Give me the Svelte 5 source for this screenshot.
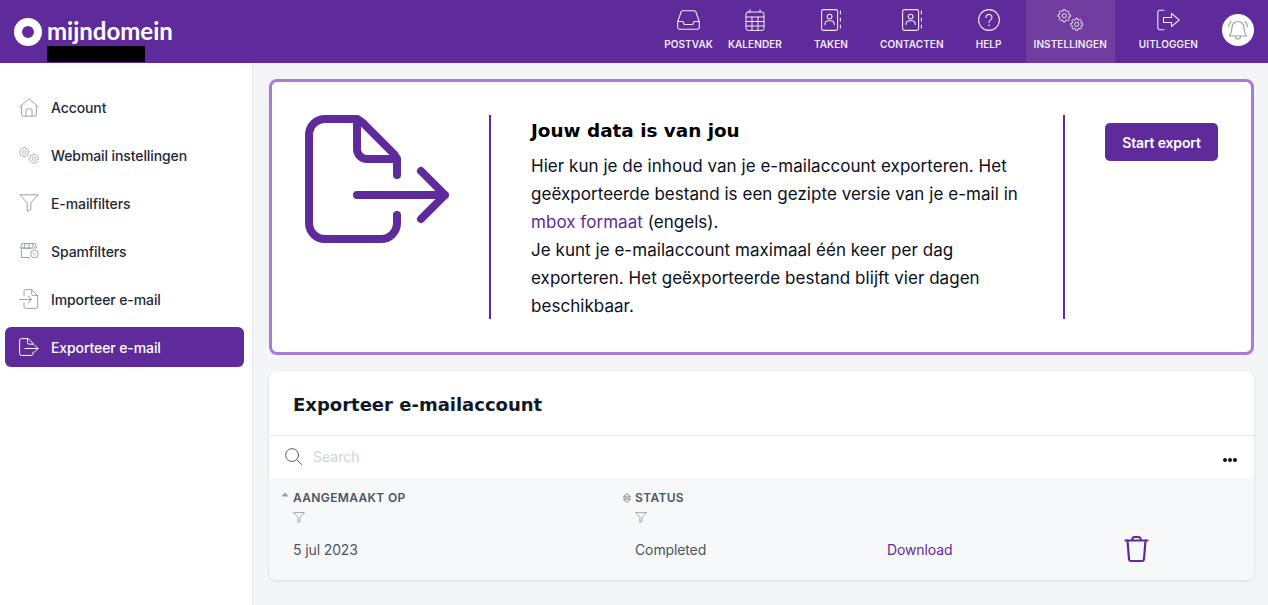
<script>
  // gear outline with square-ish teeth, used by the settings icons
  function gear(cx, cy, r, teeth = 8) {
    const pts = [];
    const step = (Math.PI * 2) / teeth;
    for (let i = 0; i < teeth; i++) {
      const a = i * step;
      const w = step * 0.2;
      const inner = r * 0.76;
      pts.push([a - step / 2 + w * 0.8, inner], [a - w, r], [a + w, r], [a + step / 2 - w * 0.8, inner]);
    }
    return (
      pts
        .map(([a, l], i) => `${i ? 'L' : 'M'}${(cx + Math.cos(a) * l).toFixed(2)} ${(cy + Math.sin(a) * l).toFixed(2)}`)
        .join('') + 'Z'
    );
  }

  const sideItems = [
    { label: 'Account', icon: 'home' },
    { label: 'Webmail instellingen', icon: 'gears' },
    { label: 'E-mailfilters', icon: 'filter' },
    { label: 'Spamfilters', icon: 'spam' },
    { label: 'Importeer e-mail', icon: 'import' },
    { label: 'Exporteer e-mail', icon: 'export', active: true }
  ];
</script>

{#snippet gears(size, h)}
  <svg width={size} height={h} viewBox="0 0 27 23" fill="none" stroke="currentColor" stroke-width="1" stroke-linejoin="round">
    <path d={gear(7, 7, 6.6)} />
    <circle cx="7" cy="7" r="2.2" />
    <path d={gear(20, 16, 6.4)} />
    <circle cx="20" cy="16" r="2.2" />
  </svg>
{/snippet}

{#snippet person()}
  <svg width="20" height="22" viewBox="0 0 20 22" fill="none" stroke="currentColor" stroke-width="1.1" stroke-linecap="round">
    <rect x="0.6" y="0.6" width="16" height="20.8" rx="1.8" />
    <circle cx="8.6" cy="7.6" r="2.4" />
    <path d="M4 15.6v-.6a3.4 3.4 0 0 1 3.4-3.2h2.4a3.4 3.4 0 0 1 3.4 3.2v.6" />
    <path d="M19.4 2v3M19.4 9v3M19.4 16v3" />
  </svg>
{/snippet}

{#snippet funnel(w, h)}
  <svg width={w} height={h} viewBox="0 0 20 18" fill="none" stroke="currentColor" stroke-width="1" stroke-linejoin="round">
    <path d="M.8.8h18.4l-7.4 8v6.6l-3.6 2V8.8z" />
  </svg>
{/snippet}

<div class="page">
  <header class="topbar">
    <div class="brand">
      <div class="brand-row">
        <span class="ring"></span>
        <span class="brand-name">mijndomein</span>
      </div>
      <span class="redacted"></span>
    </div>

    <nav class="topnav">
      <a class="nav-item tight">
        <svg width="23" height="20" viewBox="0 0 23 20" fill="none" stroke="currentColor" stroke-width="1.1" stroke-linejoin="round">
          <path d="M.7 11.5 4.2 1.8Q4.5.7 5.6.7h11.8q1.100 0 1.400 1.100l3.500 9.700v5.800q0 1.900-1.900 1.900H2.600q-1.900 0-1.900-1.900z" />
          <path d="M.7 11.500h5.200l1.400 3h8.400l1.400-3h5.200" />
        </svg>
        <span>POSTVAK</span>
      </a>
      <a class="nav-item tight-left">
        <svg width="20" height="22" viewBox="0 0 20 22" fill="none" stroke="currentColor" stroke-width="1" stroke-linecap="round">
          <rect x="1" y="3" width="18" height="18.400" rx="2" />
          <path d="M1 8h18M1 12.500h18M1 17h18M7 8v13.400M13 8v13.400M5 .8V3M15 .8V3" />
        </svg>
        <span>KALENDER</span>
      </a>
      <a class="nav-item">{@render person()}<span>TAKEN</span></a>
      <a class="nav-item">{@render person()}<span>CONTACTEN</span></a>
      <a class="nav-item">
        <svg width="22" height="22" viewBox="0 0 22 22" fill="none" stroke="currentColor" stroke-width="1.100" stroke-linecap="round">
          <circle cx="11" cy="11" r="10.400" />
          <path d="M8 8.400a3 3 0 1 1 4.600 2.500c-1 .7-1.600 1.300-1.600 2.500" />
          <path d="M11 16.300v.2" stroke-width="1.500" />
        </svg>
        <span>HELP</span>
      </a>
      <a class="nav-item current">{@render gears(27, 23)}<span>INSTELLINGEN</span></a>
      <a class="nav-item">
        <svg width="23" height="21" viewBox="0 0 23 21" fill="none" stroke="currentColor" stroke-width="1.100" stroke-linecap="round" stroke-linejoin="round">
          <path d="M7 .8H3Q.8.800.8 3v15q0 2.200 2.200 2.200h4" />
          <path d="M6.500 8h8V3.800l7.700 6.700-7.700 6.700V13h-8z" />
        </svg>
        <span>UITLOGGEN</span>
      </a>
      <span class="bell">
        <svg width="24" height="24" viewBox="0 0 24 24" fill="none" stroke="#9aa1ab" stroke-width="1.200" stroke-linecap="round" stroke-linejoin="round">
          <path d="M12 3.500a6 6 0 0 0-6 6c0 5-1 6.500-2.500 8.500h17c-1.500-2-2.500-3.500-2.500-8.500a6 6 0 0 0-6-6z" />
          <path d="M9.500 18.500a2.500 2.500 0 0 0 5 0" />
          <path d="M2.500 8.500A8 8 0 0 1 5 3.500M21.500 8.500A8 8 0 0 0 19 3.500" />
        </svg>
      </span>
    </nav>
  </header>

  <div class="layout">
    <aside class="sidebar">
      {#each sideItems as item}
        <a class="side-item" class:active={item.active}>
          <span class="side-icon">
            {#if item.icon === 'home'}
              <svg width="20" height="19" viewBox="0 0 20 19" fill="none" stroke="currentColor" stroke-width="1" stroke-linejoin="round">
                <path d="M.6 9 10 .8 19.400 9M2.600 8v8.500q0 1.700 1.700 1.700h11.400q1.700 0 1.700-1.700V8" />
                <path d="M7 18.200v-6q0-1.200 1.200-1.200h3.600q1.200 0 1.200 1.200v6" />
              </svg>
            {:else if item.icon === 'gears'}
              {@render gears(20, 17)}
            {:else if item.icon === 'filter'}
              {@render funnel(20, 18)}
            {:else if item.icon === 'spam'}
              <svg width="20" height="16" viewBox="0 0 20 16" fill="none" stroke="currentColor" stroke-width="1" stroke-linejoin="round">
                <path d="M3 .6h13l1.500 4.400H1.500z" />
                <path d="M1.500 5q1.300 1.600 2.700 0 1.300 1.600 2.700 0 1.300 1.600 2.700 0 1.300 1.600 2.700 0M2.400 6.500v8h8.600M6 .6 5 5M10 .6V5M13.500.6l.8 3.500" />
                <circle cx="15.500" cy="11" r="3.800" />
                <path d="M14 9.500l3 3" />
              </svg>
            {:else if item.icon === 'import'}
              <svg width="20" height="20" viewBox="0 0 20 20" fill="none" stroke="currentColor" stroke-width="1" stroke-linecap="round" stroke-linejoin="round">
                <path d="M5 7V2.200Q5 .6 6.600.6h6.100l6 6v11.200q0 1.600-1.600 1.600H6.600Q5 19.400 5 17.800V14" />
                <path d="M12.700.6v4.400q0 1.600 1.600 1.600h4.400" />
                <path d="M.6 10.500h11.900M9 7l3.500 3.500L9 14" />
              </svg>
            {:else}
              <svg width="20" height="18" viewBox="0 0 20 18" fill="none" stroke="currentColor" stroke-width="1" stroke-linecap="round" stroke-linejoin="round">
                <path d="M14 6.500V5.500L9.500.6H2.400Q.6.600.6 2.400v13.200q0 1.800 1.800 1.800h9.800q1.800 0 1.800-1.800V14" />
                <path d="M8.500.6v4q0 1.500 1.500 1.500h4" />
                <path d="M6 10.500h13M15.500 7l3.500 3.500-3.500 3.500" />
              </svg>
            {/if}
          </span>
          <span>{item.label}</span>
        </a>
      {/each}
    </aside>

    <main class="content">
      <section class="callout">
        <div class="callout-icon">
          <svg width="155" height="140" viewBox="0 0 155 140" fill="none" stroke="#5f2b9b" stroke-width="8" stroke-linecap="round" stroke-linejoin="round">
            <path d="M97 65V52q0-5-3.500-8.500L63 13q-4-4-9-4H25A16 16 0 0 0 9 25v88a16 16 0 0 0 16 16h56a16 16 0 0 0 16-16v-8" />
            <path d="M57 9v30a10 10 0 0 0 10 10h30" />
            <path d="M57 85h88M121 61l24 24-24 24" />
          </svg>
        </div>
        <div class="callout-text">
          <h2>Jouw data is van jou</h2>
          <p>
            Hier kun je de inhoud van je e-mailaccount exporteren. Het geëxporteerde bestand is een gezipte versie van je e-mail in
            <a href="#mbox">mbox formaat</a> (engels).<br />
            Je kunt je e-mailaccount maximaal één keer per dag exporteren. Het geëxporteerde bestand blijft vier dagen beschikbaar.
          </p>
        </div>
        <div class="callout-action">
          <button>Start export</button>
        </div>
      </section>

      <section class="card">
        <h3>Exporteer e-mailaccount</h3>
        <div class="search-row">
          <svg width="17" height="17" viewBox="0 0 18 18" fill="none" stroke="#4b5563" stroke-width="1" stroke-linecap="round">
            <circle cx="7.500" cy="7.500" r="6.800" />
            <path d="M12.500 12.500l5 5" />
          </svg>
          <span class="placeholder">Search</span>
          <span class="dots"><i></i><i></i><i></i></span>
        </div>
        <div class="table-wrap">
          <table>
            <colgroup>
              <col style="width:342px" />
              <col style="width:252px" />
              <col style="width:223px" />
              <col />
            </colgroup>
            <thead>
              <tr>
                <th>
                  <div class="th-label">
                    <svg class="sort" width="8" height="10" viewBox="0 0 8 10" fill="#9aa1ab"><path d="M4 1.500 7.500 5h-7z" /><path d="M1 5h6" stroke="#9aa1ab" /></svg>
                    AANGEMAAKT OP
                  </div>
                  <div class="th-filter">{@render funnel(12, 11)}</div>
                </th>
                <th>
                  <div class="th-label wide">
                    <svg class="sort" width="10" height="12" viewBox="0 0 10 12" fill="none" stroke="#6b7280" stroke-width=".9"><path d="M1.500 5 5 1.500 8.500 5zM1.500 7 5 10.500 8.500 7z" /></svg>
                    STATUS
                  </div>
                  <div class="th-filter">{@render funnel(12, 11)}</div>
                </th>
                <th></th>
                <th></th>
              </tr>
            </thead>
            <tbody>
              <tr>
                <td>5 jul 2023</td>
                <td>Completed</td>
                <td><a href="#download">Download</a></td>
                <td>
                  <svg class="trash" width="25" height="28" viewBox="0 0 25 28" fill="none" stroke="#5f2b9b" stroke-width="2.200" stroke-linecap="round" stroke-linejoin="round">
                    <path d="M1.500 5.500h22M8 5.500l.6-2.200Q9 2 10.200 2h4.600q1.200 0 1.600 1.300l.6 2.200" />
                    <path d="M3.500 5.500 5 24q.2 2 2 2h11q1.800 0 2-2l1.500-18.500" />
                  </svg>
                </td>
              </tr>
            </tbody>
          </table>
        </div>
      </section>
    </main>
  </div>
</div>

<style>
  :global(body) {
    margin: 0;
    font-family: Inter, "Liberation Sans", sans-serif;
    color: #111827;
  }

  .page {
    height: 100vh;
    display: flex;
    flex-direction: column;
    overflow: hidden;
  }

  .topbar {
    height: 63px;
    flex: none;
    background: #5f2b9b;
    display: flex;
    justify-content: space-between;
    color: #fff;
  }

  .brand {
    padding: 18px 0 0 14px;
  }

  .brand-row {
    display: flex;
    align-items: center;
    gap: 5px;
    height: 28px;
  }

  .ring {
    width: 28px;
    height: 28px;
    box-sizing: border-box;
    border: 8px solid #fff;
    border-radius: 50%;
  }

  .brand-name {
    font-family: Lato, sans-serif;
    font-weight: 700;
    font-size: 24px;
    line-height: 24px;
    margin-top: -3px;
  }

  .redacted {
    display: block;
    width: 98px;
    height: 16px;
    margin-left: 33px;
    background: #000;
  }

  .topnav {
    display: flex;
    gap: 16px;
    padding-right: 14px;
  }

  .nav-item {
    display: flex;
    flex-direction: column;
    align-items: center;
    padding: 9px 8px 0;
    color: #f1eaf8;
    font-size: 10px;
    font-weight: 600;
    letter-spacing: 0.08px;
  }

  .nav-item svg {
    height: 22px;
  }

  .nav-item span {
    margin-top: 7px;
    line-height: 12px;
  }

  .nav-item.tight {
    padding-left: 0;
    padding-right: 0;
    margin-right: -1px;
  }

  .nav-item.tight-left {
    padding-left: 0;
  }

  .nav-item.current {
    background: #703c9f;
  }

  .bell {
    width: 32px;
    height: 32px;
    margin-top: 14px;
    border-radius: 50%;
    background: #fff;
    display: flex;
    align-items: center;
    justify-content: center;
  }

  .layout {
    flex: 1;
    display: flex;
    min-height: 0;
  }

  .sidebar {
    width: 253px;
    flex: none;
    box-sizing: border-box;
    border-right: 1px solid #e5e7eb;
    background: #fff;
    padding: 24px 8px 0 5px;
    display: flex;
    flex-direction: column;
    gap: 8px;
  }

  .side-item {
    height: 40px;
    border-radius: 6px;
    display: flex;
    align-items: center;
    padding-left: 14px;
    font-size: 14px;
    font-weight: 500;
    letter-spacing: -0.1px;
    color: #1f2937;
  }

  .side-icon {
    width: 20px;
    margin-right: 12px;
    display: flex;
    color: #9aa1ab;
  }

  .side-item.active {
    background: #5f2b9b;
    color: #fff;
  }

  .side-item.active .side-icon {
    color: #fff;
  }

  .content {
    flex: 1;
    background: #f3f5f7;
    padding: 16px 14px 0 16px;
  }

  .callout {
    height: 276px;
    box-sizing: border-box;
    border: 3px solid #a97ad8;
    border-radius: 8px;
    background: #fff;
    padding: 33px 0;
    display: flex;
  }

  .callout-icon {
    width: 217px;
    flex: none;
    box-sizing: border-box;
    padding: 0 0 0 28px;
    margin-top: -5px;
  }

  .callout-text {
    width: 576px;
    flex: none;
    box-sizing: border-box;
    border-left: 2px solid #5f2b9b;
    border-right: 2px solid #5f2b9b;
    padding: 0 38px 0 40px;
    font-size: 17px;
    letter-spacing: 0.04px;
    line-height: 28px;
    color: #0b0f19;
  }

  .callout-text h2 {
    margin: 3px 0 8px;
    font-family: "DejaVu Sans", sans-serif;
    font-size: 18.4px;
    font-weight: 700;
    line-height: 26px;
    letter-spacing: 0;
    color: #000;
  }

  .callout-text p {
    margin: 0;
  }

  .callout-text a {
    color: #5f2b9b;
    text-decoration: none;
  }

  .callout-action {
    flex: 1;
    padding: 8px 0 0 40px;
  }

  .callout-action button {
    width: 113px;
    height: 38px;
    border: 0;
    border-radius: 5px;
    background: #5f2b9b;
    color: #fff;
    font: 600 14px Inter, sans-serif;
    letter-spacing: -0.15px;
  }

  .card {
    margin-top: 16px;
    height: 209px;
    border-radius: 8px;
    background: #fff;
    overflow: hidden;
    box-shadow: 0 1px 3px rgba(0, 0, 0, 0.12);
  }

  .card h3 {
    margin: 0;
    height: 65px;
    box-sizing: border-box;
    padding-left: 24px;
    border-bottom: 1px solid #e5e7eb;
    font-family: "DejaVu Sans", sans-serif;
    font-size: 18px;
    font-weight: 700;
    line-height: 68px;
    color: #111827;
  }

  .search-row {
    height: 42px;
    display: flex;
    align-items: center;
    padding: 0 17px 2px 16px;
    box-sizing: border-box;
  }

  .placeholder {
    margin-left: 11px;
    font-size: 14px;
    color: #cbd5e0;
  }

  .dots {
    margin-left: auto;
    display: flex;
    gap: 1px;
    padding-top: 8px;
  }

  .dots i {
    width: 4px;
    height: 4px;
    border-radius: 50%;
    background: #111;
  }

  .table-wrap {
    height: 102px;
    background: #f7f8fa;
  }

  table {
    width: 100%;
    border-collapse: collapse;
    table-layout: fixed;
  }

  th {
    padding: 13px 0 0 24px;
    text-align: left;
    vertical-align: top;
    font-size: 12px;
    font-weight: 600;
    letter-spacing: 0.35px;
    color: #4b5563;
  }

  .th-label {
    position: relative;
    line-height: 14px;
  }

  .sort {
    position: absolute;
    left: -12px;
    top: 0;
  }

  .th-label.wide .sort {
    left: -13px;
    top: 1px;
  }

  .th-filter {
    margin-top: 6px;
    height: 14px;
    color: #6b7280;
  }

  td {
    padding: 0 0 0 24px;
    height: 48px;
    font-size: 14px;
    letter-spacing: -0.12px;
    color: #4b5563;
    vertical-align: middle;
  }

  td a {
    color: #5f2b9b;
    text-decoration: none;
  }

  .trash {
    display: block;
    margin-left: 14px;
    margin-top: -1px;
  }
</style>
